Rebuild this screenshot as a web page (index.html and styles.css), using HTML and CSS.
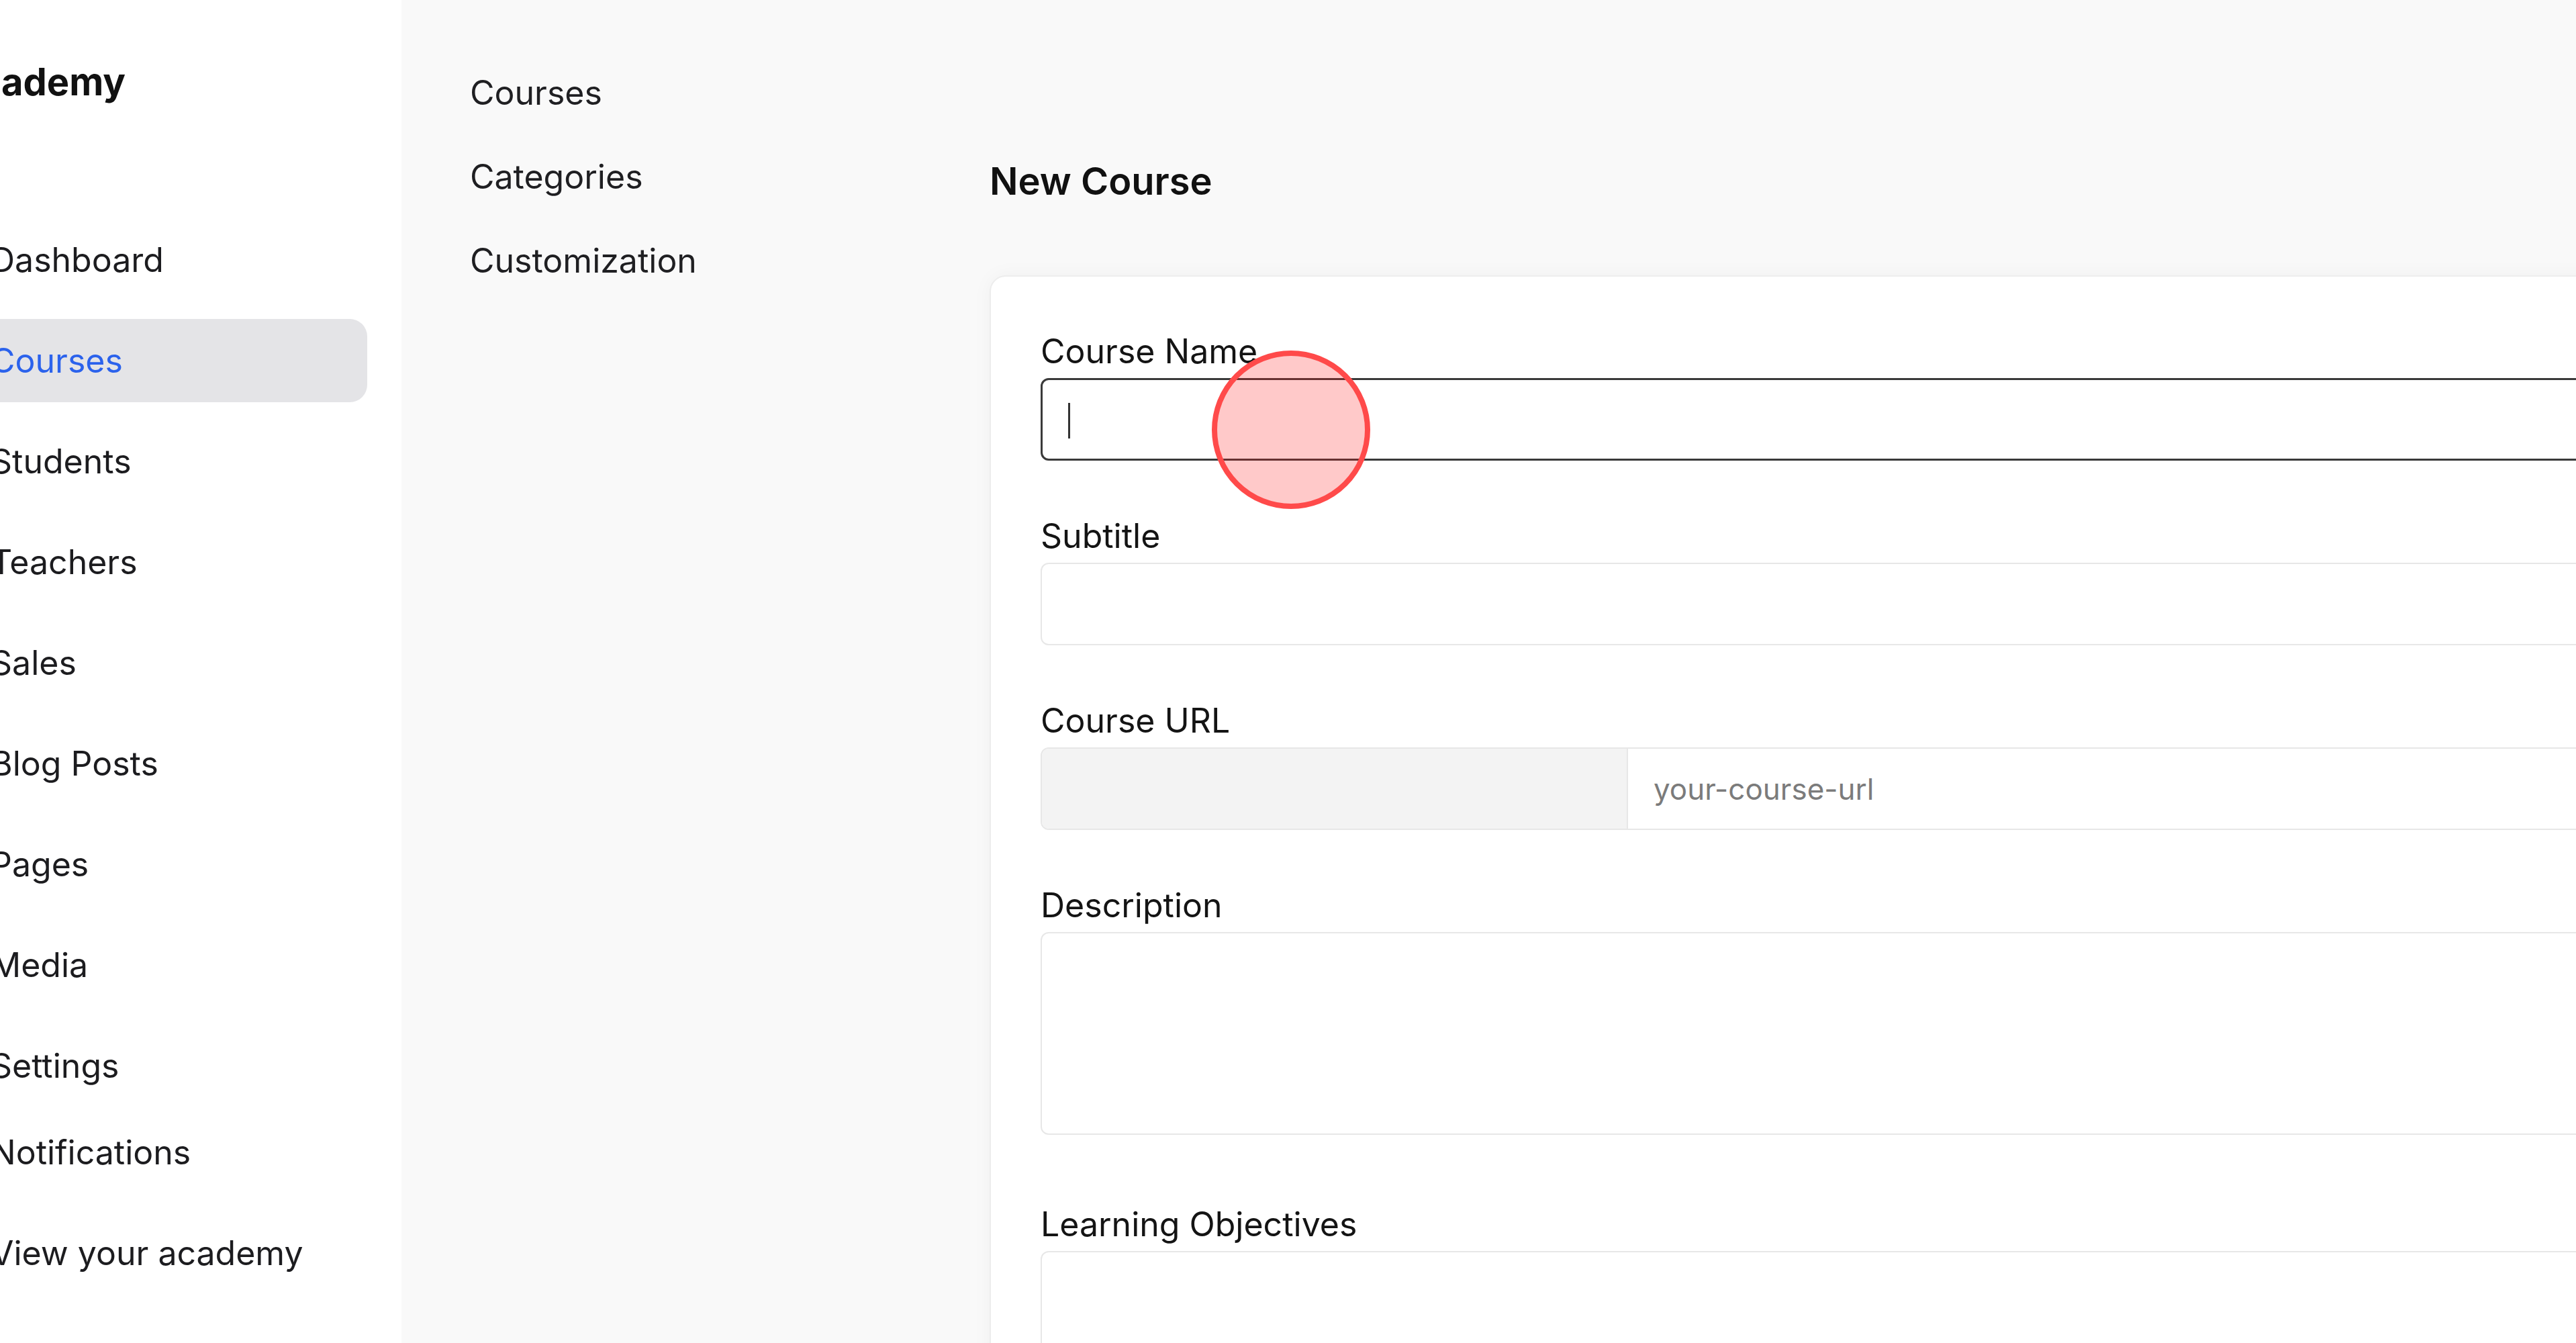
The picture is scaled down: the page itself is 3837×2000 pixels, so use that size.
FILE: index.html
```html
<!DOCTYPE html>
<html lang="en">
<head>
    <meta charset="UTF-8">
    <meta name="viewport" content="width=device-width, initial-scale=1.0">
    <title>New Course</title>
    <link rel="stylesheet" href="styles.css">
</head>
<body>

    <aside class="sidebar">
        <div class="logo">Academy</div>

        <nav class="nav">
            <a class="nav-item" href="#">Dashboard</a>
            <a class="nav-item active" href="#">Courses</a>
            <a class="nav-item" href="#">Students</a>
            <a class="nav-item" href="#">Teachers</a>
            <a class="nav-item" href="#">Sales</a>
            <a class="nav-item" href="#">Blog Posts</a>
            <a class="nav-item" href="#">Pages</a>
            <a class="nav-item" href="#">Media</a>
            <a class="nav-item" href="#">Settings</a>
        </nav>

        <nav class="nav nav-bottom">
            <a class="nav-item" href="#">Notifications</a>
            <a class="nav-item" href="#">View your academy</a>
        </nav>
    </aside>

    <main class="main">
        <!-- sub menu of Courses -->
        <nav class="subnav">
            <a class="subnav-item" href="#">Courses</a>
            <a class="subnav-item" href="#">Categories</a>
            <a class="subnav-item" href="#">Customization</a>
        </nav>

        <section class="content">
            <h1 class="page-title">New Course</h1>

            <form class="card">
                <div class="field">
                    <label class="label" for="name">Course Name</label>
                    <div class="input-wrap">
                        <input class="input focused" id="name" type="text">
                        <span class="caret"></span>
                        <span class="click-dot"></span>
                    </div>
                </div>

                <div class="field">
                    <label class="label" for="subtitle">Subtitle</label>
                    <input class="input" id="subtitle" type="text">
                </div>

                <div class="field">
                    <label class="label" for="url">Course URL</label>
                    <div class="input-group">
                        <span class="addon"></span>
                        <input class="group-input" id="url" type="text" placeholder="your-course-url">
                    </div>
                </div>

                <div class="field field-wide">
                    <label class="label" for="description">Description</label>
                    <textarea class="textarea" id="description"></textarea>
                </div>

                <div class="field">
                    <label class="label" for="objectives">Learning Objectives</label>
                    <textarea class="textarea" id="objectives"></textarea>
                </div>
            </form>
        </section>
    </main>

</body>
</html>
```

FILE: styles.css
```css
* {
    box-sizing: border-box;
}

body {
    margin: 0;
    display: flex;
    height: 100vh;
    overflow: hidden;
    font-family: Inter, "Liberation Sans", sans-serif;
    color: #18181b;
    background-color: #f9f9f9;
}

a {
    text-decoration: none;
    color: inherit;
}

/* Sidebar */
.sidebar {
    flex: 0 0 598px;
    display: flex;
    flex-direction: column;
    padding-top: 89px;
    background-color: #fff;
    overflow: hidden;
}

.logo {
    margin-left: -72px;
    font-size: 56px;
    line-height: 67px;
    font-weight: 700;
    color: #111;
}

.nav {
    display: flex;
    flex-direction: column;
    gap: 26px;
    margin: 169px 51px 0 -40px;
}

.nav-bottom {
    margin-top: 5px;
}

.nav-item {
    display: flex;
    align-items: center;
    height: 124px;
    padding: 0 26px;
    border-radius: 26px;
    font-size: 50px;
    white-space: nowrap;
    color: #1c1c1f;
}

.nav-item.active {
    background-color: #e4e4e7;
    color: #2b62ec;
}

/* Main area */
.main {
    flex: 1;
    display: flex;
    padding: 75px 0 0 102px;
}

.subnav {
    flex: 0 0 774px;
    display: flex;
    flex-direction: column;
}

.subnav-item {
    display: flex;
    align-items: center;
    height: 125px;
    font-size: 50px;
    color: #1f1f22;
}

.content {
    flex: 0 0 2700px;
    padding-top: 162px;
}

.page-title {
    margin: 0 0 107px;
    font-size: 56px;
    line-height: 66px;
    font-weight: 600;
    color: #111;
}

.card {
    display: flex;
    flex-direction: column;
    gap: 76px;
    padding: 75px 74px;
    min-height: 1700px;
    background: #fff;
    border: 2px solid #ededed;
    border-radius: 24px;
    box-shadow: 0 0 30px rgba(0, 0, 0, 0.04);
}

.field {
    display: flex;
    flex-direction: column;
    gap: 4px;
}

.field-wide {
    margin-bottom: 21px;
}

.label {
    font-size: 50px;
    line-height: 72px;
    font-weight: 400;
    color: #141414;
}

.input,
.textarea {
    width: 100%;
    height: 123px;
    border: 2px solid #e7e7e7;
    border-radius: 12px;
    padding: 0 39px;
    font-family: inherit;
    font-size: 46px;
    background: #fff;
    outline: none;
}

.textarea {
    height: 302px;
    resize: none;
}

.input.focused {
    border: 3px solid #3a3a3a;
}

.input-wrap {
    position: relative;
}

.caret {
    position: absolute;
    left: 41px;
    top: 37px;
    width: 3px;
    height: 53px;
    background: #333;
}

/* click indicator from the recording */
.click-dot {
    position: absolute;
    left: 255px;
    top: -41px;
    width: 236px;
    height: 236px;
    border: 8px solid #ff4a4a;
    border-radius: 50%;
    background: rgba(255, 20, 20, 0.23);
}

.input-group {
    display: flex;
    height: 123px;
    border: 2px solid #e7e7e7;
    border-radius: 12px;
    overflow: hidden;
}

.addon {
    flex: 0 0 873px;
    background: #f3f3f3;
    border-right: 2px solid #e7e7e7;
}

.group-input {
    flex: 1;
    border: none;
    outline: none;
    padding: 0 38px;
    font-family: inherit;
    font-size: 44px;
    color: #333;
}

.group-input::placeholder {
    color: #7b7b7b;
}
```
